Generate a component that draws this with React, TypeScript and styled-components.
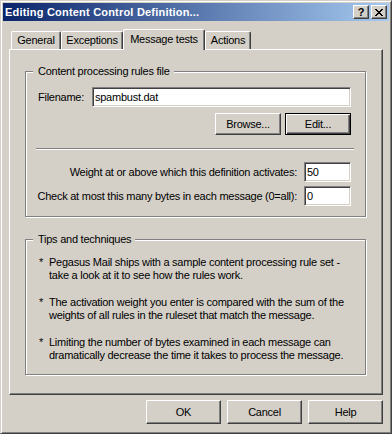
import React from "react";
import styled, { createGlobalStyle } from "styled-components";

const FACE = "#d4d0c8";
const SHADOW = "#808080";
const DARK = "#404040";

const GlobalStyle = createGlobalStyle`
  html, body {
    margin: 0;
    padding: 0;
    background: ${FACE};
  }
  body {
    font-family: "Liberation Sans", Arial, sans-serif;
    font-size: 11px;
    letter-spacing: -0.25px;
    color: #000;
  }
`;

const Window = styled.div`
  box-sizing: border-box;
  width: 392px;
  height: 434px;
  background: ${FACE};
  border: 1px solid;
  border-color: ${FACE} ${DARK} ${DARK} ${FACE};
  box-shadow: inset 1px 1px #fff, inset -1px -1px ${SHADOW};
  padding: 2px;
  display: flex;
  flex-direction: column;
`;

const TitleBar = styled.div`
  height: 18px;
  display: flex;
  align-items: center;
  padding: 0 2px 0 2px;
  background: linear-gradient(to right, #0a246a, #a6caf0);
`;

const TitleText = styled.div`
  flex: 1;
  color: #fff;
  font-weight: bold;
  font-size: 11px;
  letter-spacing: 0.2px;
  white-space: nowrap;
`;

const CaptionButtons = styled.div`
  display: flex;
  gap: 2px;
`;

const CaptionButton = styled.div`
  box-sizing: border-box;
  width: 16px;
  height: 14px;
  background: ${FACE};
  border: 1px solid;
  border-color: #fff ${DARK} ${DARK} #fff;
  box-shadow: inset -1px -1px ${SHADOW};
  display: flex;
  align-items: center;
  justify-content: center;
  font-weight: bold;
  font-size: 11px;
  letter-spacing: 0;
  line-height: 1;
`;

const Body = styled.div`
  padding: 8px 6px 0 6px;
  display: flex;
  flex-direction: column;
`;

const TabStrip = styled.div`
  height: 20px;
  display: flex;
  align-items: flex-end;
  padding-left: 2px;
`;

const Tab = styled.div<{ $w: number; $active?: boolean }>`
  box-sizing: border-box;
  width: ${(p) => p.$w}px;
  height: ${(p) => (p.$active ? 21 : 18)}px;
  margin-bottom: ${(p) => (p.$active ? -1 : 0)}px;
  position: relative;
  z-index: ${(p) => (p.$active ? 1 : 0)};
  background: ${FACE};
  border-top: 1px solid #fff;
  border-left: 1px solid #fff;
  border-right: 1px solid ${DARK};
  border-radius: 2px 2px 0 0;
  box-shadow: inset -1px 0 ${SHADOW};
  display: flex;
  justify-content: center;
  padding-top: ${(p) => (p.$active ? 3 : 2)}px;
  white-space: nowrap;
`;

const Panel = styled.div`
  box-sizing: border-box;
  height: 346px;
  border: 1px solid;
  border-color: #fff ${DARK} ${DARK} #fff;
  box-shadow: inset -1px -1px ${SHADOW};
  padding: 15px 16px 0 15px;
  display: flex;
  flex-direction: column;
  gap: 16px;
`;

const Group = styled.fieldset`
  margin: 0;
  padding: 0;
  min-width: 0;
  border: 1px solid ${SHADOW};
  box-shadow: 1px 1px 0 #fff, inset 1px 1px 0 #fff;
`;

const Legend = styled.legend`
  margin-left: 7px;
  padding: 0 4px 0 5px;
  line-height: 13px;
  background: ${FACE};
`;

const GroupBody = styled.div<{ $pad: string }>`
  padding: ${(p) => p.$pad};
  display: flex;
  flex-direction: column;
`;

const Row = styled.div<{ $end?: boolean; $gap?: number; $mt?: number }>`
  display: flex;
  align-items: center;
  justify-content: ${(p) => (p.$end ? "flex-end" : "flex-start")};
  gap: ${(p) => p.$gap ?? 0}px;
  margin-top: ${(p) => p.$mt ?? 0}px;
`;

const FieldLabel = styled.label<{ $w?: number }>`
  width: ${(p) => (p.$w ? `${p.$w}px` : "auto")};
  flex-shrink: 0;
  white-space: nowrap;
`;

const TextInput = styled.input<{ $w?: number }>`
  box-sizing: border-box;
  height: 20px;
  width: ${(p) => (p.$w ? `${p.$w}px` : "auto")};
  flex: ${(p) => (p.$w ? "none" : "1")};
  min-width: 0;
  margin: 0;
  border: 1px solid;
  border-color: ${SHADOW} #fff #fff ${SHADOW};
  box-shadow: inset 1px 1px ${DARK}, inset -1px -1px ${FACE};
  background: #fff;
  padding: 0 0 0 2px;
  font-family: "Liberation Sans", Arial, sans-serif;
  font-size: 11px;
  letter-spacing: inherit;
  color: #000;
  outline: none;
`;

const Button = styled.button<{ $w: number; $h: number; $default?: boolean }>`
  box-sizing: border-box;
  width: ${(p) => p.$w}px;
  height: ${(p) => p.$h}px;
  margin: 0;
  padding: 0;
  background: ${FACE};
  font-family: "Liberation Sans", Arial, sans-serif;
  font-size: 11px;
  letter-spacing: inherit;
  color: #000;
  border: 1px solid;
  border-color: ${(p) => (p.$default ? "#000" : `#fff ${DARK} ${DARK} #fff`)};
  box-shadow: ${(p) =>
    p.$default
      ? `inset 1px 1px #fff, inset -1px -1px ${DARK}, inset -2px -2px ${SHADOW}`
      : `inset -1px -1px ${SHADOW}`};
`;

const Separator = styled.div`
  margin: 13px -3px 0 -2px;
  border-top: 1px solid ${SHADOW};
  border-bottom: 1px solid #fff;
`;

const Tips = styled.div`
  display: flex;
  flex-direction: column;
  gap: 14px;
`;

const Tip = styled.div`
  display: flex;
  line-height: 13px;
`;

const Bullet = styled.span`
  width: 10px;
  flex-shrink: 0;
`;

const TipText = styled.span`
  white-space: nowrap;
`;

const ButtonRow = styled.div`
  margin-top: 5px;
  display: flex;
  justify-content: flex-end;
  gap: 6px;
`;

const CloseGlyph = () => (
  <svg width="8" height="7" viewBox="0 0 8 7" shapeRendering="crispEdges">
    <path
      d="M0 0h2v1h-2zM6 0h2v1h-2zM1 1h2v1h-2zM5 1h2v1h-2zM2 2h4v1h-4zM3 3h2v1h-2zM2 4h4v1h-4zM1 5h2v1h-2zM5 5h2v1h-2zM0 6h2v1h-2zM6 6h2v1h-2z"
      fill="#000"
    />
  </svg>
);

const tabs = [
  { label: "General", w: 50 },
  { label: "Exceptions", w: 62 },
  { label: "Message tests", w: 82, active: true },
  { label: "Actions", w: 46 },
];

const tips = [
  [
    "Pegasus Mail ships with a sample content processing rule set -",
    "take a look at it to see how the rules work.",
  ],
  [
    "The activation weight you enter is compared with the sum of the",
    "weights of all rules in the ruleset that match the message.",
  ],
  [
    "Limiting the number of bytes examined in each message can",
    "dramatically decrease the time it takes to process the message.",
  ],
];

export default function App() {
  return (
    <>
      <GlobalStyle />
      <Window>
        <TitleBar>
          <TitleText>Editing Content Control Definition...</TitleText>
          <CaptionButtons>
            <CaptionButton>?</CaptionButton>
            <CaptionButton>
              <CloseGlyph />
            </CaptionButton>
          </CaptionButtons>
        </TitleBar>
        <Body>
          <TabStrip>
            {tabs.map((t) => (
              <Tab key={t.label} $w={t.w} $active={t.active}>
                {t.label}
              </Tab>
            ))}
          </TabStrip>
          <Panel>
            <Group>
              <Legend>Content processing rules file</Legend>
              <GroupBody $pad="9px 14px 10px 12px">
                <Row>
                  <FieldLabel $w={54}>Filename:</FieldLabel>
                  <TextInput defaultValue="spambust.dat" />
                </Row>
                <Row $end $gap={4} $mt={6}>
                  <Button $w={66} $h={22}>
                    Browse...
                  </Button>
                  <Button $w={66} $h={22} $default>
                    Edit...
                  </Button>
                </Row>
                <Separator />
                <Row $end $gap={7} $mt={12}>
                  <FieldLabel>Weight at or above which this definition activates:</FieldLabel>
                  <TextInput $w={47} defaultValue="50" />
                </Row>
                <Row $end $gap={7} $mt={4}>
                  <FieldLabel>Check at most this many bytes in each message (0=all):</FieldLabel>
                  <TextInput $w={47} defaultValue="0" />
                </Row>
              </GroupBody>
            </Group>
            <Group>
              <Legend>Tips and techniques</Legend>
              <GroupBody $pad="10px 14px 12px 13px">
                <Tips>
                  {tips.map((lines, i) => (
                    <Tip key={i}>
                      <Bullet>*</Bullet>
                      <TipText>
                        {lines[0]}
                        <br />
                        {lines[1]}
                      </TipText>
                    </Tip>
                  ))}
                </Tips>
              </GroupBody>
            </Group>
          </Panel>
          <ButtonRow>
            <Button $w={75} $h={24}>OK</Button>
            <Button $w={75} $h={24}>Cancel</Button>
            <Button $w={75} $h={24}>Help</Button>
          </ButtonRow>
        </Body>
      </Window>
    </>
  );
}
